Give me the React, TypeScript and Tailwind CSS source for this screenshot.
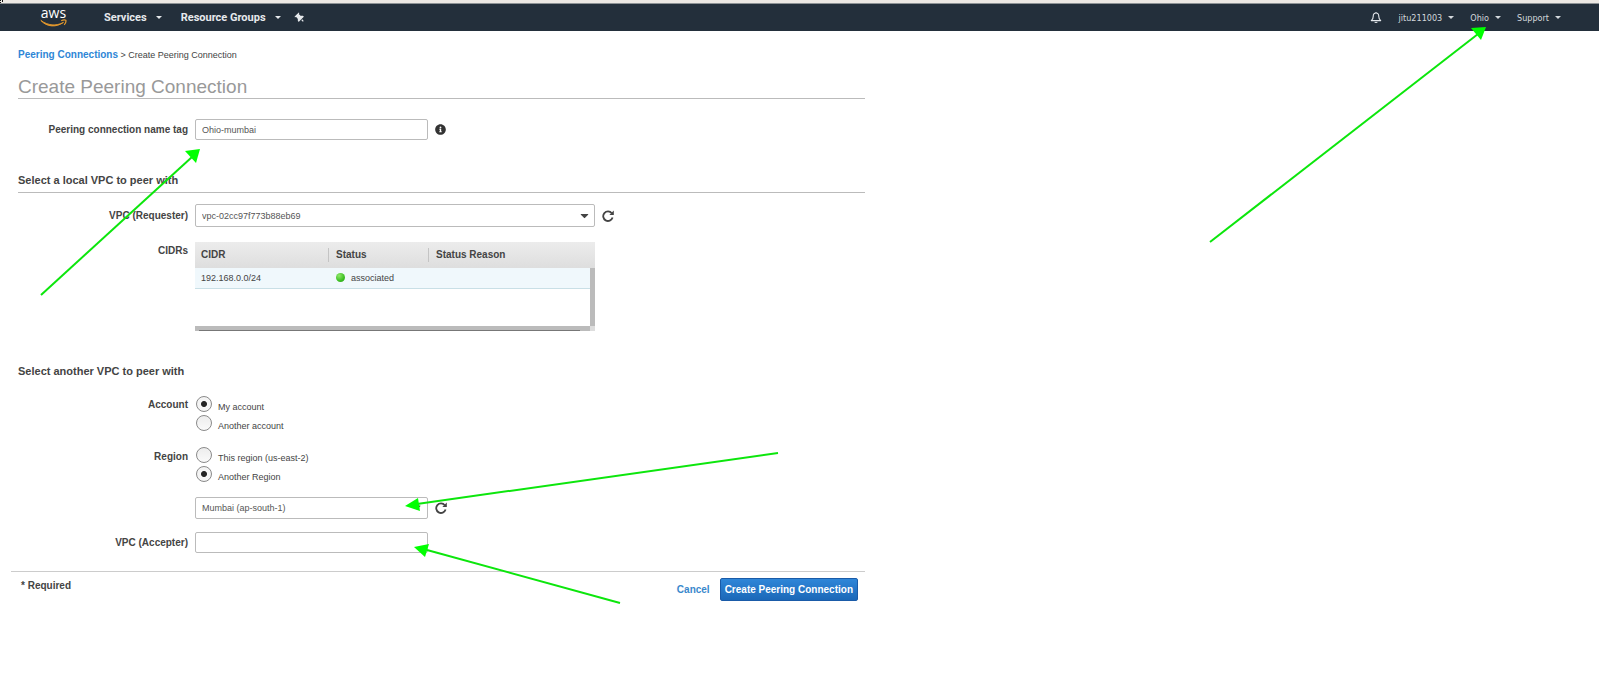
import React from "react";
import { FaInfoCircle, FaCaretDown } from "react-icons/fa";
import { FaThumbtack } from "react-icons/fa6";

function Caret() {
  return (
    <svg viewBox="0 0 6 3" className="h-[3px] w-[6px] shrink-0" aria-hidden="true">
      <path d="M0 0h6L3 3z" fill="currentColor" />
    </svg>
  );
}

function AwsLogo() {
  return (
    <a href="#" aria-label="AWS home" className="flex w-[27px] flex-col">
      <span className="block h-[10px] text-center font-['Open_Sans',sans-serif] text-[14px] leading-[8px] font-medium text-white">aws</span>
      <svg viewBox="0 0 27 8" className="h-[8px] w-[27px]" aria-hidden="true">
        <path d="M.8 1.4C8 6.6 16 7.4 23.5 3.4C16 8.6 7 8.2 .8 1.4z" fill="#e59a2c" stroke="#e59a2c" strokeWidth=".9" />
        <path d="M21.2 1.7C23 .9 25 .8 25.9 1.3C26.2 2.8 25.4 4.6 24.2 5.8" fill="none" stroke="#e59a2c" strokeWidth="1.2" />
      </svg>
    </a>
  );
}

function Bell() {
  return (
    <svg viewBox="0 0 12 13" className="h-[13px] w-[12px]" fill="none" stroke="#e4e8ec" strokeWidth="1.1" aria-hidden="true">
      <path d="M6 1v1M6 2C3.9 2 3.2 3.6 3.2 5.4C3.2 7.7 2.2 8.4 1.3 9.6H10.7C9.8 8.4 8.8 7.7 8.8 5.4C8.8 3.6 8.1 2 6 2z" strokeLinejoin="round" />
      <path d="M4.8 10.8C5.1 11.8 6.9 11.8 7.2 10.8" />
    </svg>
  );
}

function Refresh() {
  return (
    <svg viewBox="0 0 12 12" className="h-3 w-3" aria-hidden="true">
      <path d="M9.8 3.2A4.8 4.8 0 1 0 10.6 7.6" fill="none" stroke="#444" strokeWidth="1.8" />
      <path d="M11.8 .6V5H7.4z" fill="#444" />
    </svg>
  );
}

function Row({ label, htmlFor, className = "", children }: { label: string; htmlFor?: string; className?: string; children: React.ReactNode }) {
  const cls = "w-[188px] shrink-0 text-right text-[10px] font-bold";
  return (
    <div className={`flex gap-[7px] ${className}`}>
      {htmlFor ? <label htmlFor={htmlFor} className={cls}>{label}</label> : <span className={cls}>{label}</span>}
      {children}
    </div>
  );
}

function Radio({ name, label, checked }: { name: string; label: string; checked?: boolean }) {
  return (
    <label className="flex h-[19px] items-start gap-[6px]">
      <input
        type="radio"
        name={name}
        defaultChecked={checked}
        className="ml-px h-4 w-4 appearance-none rounded-full border border-[#8a8a8a] bg-linear-to-b from-[#ededed] to-[#fafafa] checked:bg-[radial-gradient(circle,#222_0,#222_2.5px,#f4f4f4_3.5px)]"
      />
      <span className="pt-[5px]">{label}</span>
    </label>
  );
}

const arrows = [
  { line: "M41 295L192 157", head: "M200 149L196 163L185 151z" },
  { line: "M1210 242L1478 34", head: "M1486 27L1481 40L1471 28z" },
  { line: "M778 453L417 504", head: "M405 506L418 498L420 511z" },
  { line: "M620 603L427 550", head: "M414 547L429 544L425 557z" },
];

export default function App() {
  const field = "rounded-[2px] border border-[#bbb] bg-white px-[6px] text-[#555]";
  return (
    <div className="relative min-h-screen overflow-hidden bg-white font-['Liberation_Sans',Arial,sans-serif] text-[9px] leading-[12px] text-[#444]">
      <div className="h-[4px] border-b border-[#8d9295] bg-[#ece8e3]" />
      <header className="flex h-[27px] items-center bg-[#232f3b] pr-[38px] pl-[40px] text-[#e6e9ec]">
        <AwsLogo />
        <nav className="ml-[37px] flex items-center font-['Roboto',sans-serif] text-[11px] font-bold">
          <button type="button" className="flex items-center gap-[9px]">Services <Caret /></button>
          <button type="button" className="ml-[19px] flex items-center gap-[9px]">Resource Groups <Caret /></button>
          <button type="button" aria-label="Pin shortcuts" className="ml-[14px]">
            <FaThumbtack className="h-[10px] w-[10px] -rotate-45" />
          </button>
        </nav>
        <div className="ml-auto flex items-center font-['DejaVu_Sans_Condensed','DejaVu_Sans',sans-serif] text-[9px] text-[#d3d8dc]">
          <button type="button" aria-label="Notifications"><Bell /></button>
          <button type="button" className="ml-[17px] flex items-center gap-[6px]">jitu211003 <Caret /></button>
          <button type="button" className="ml-[16px] flex items-center gap-[6px]">Ohio <Caret /></button>
          <button type="button" className="ml-[16px] flex items-center gap-[6px]">Support <Caret /></button>
        </div>
      </header>

      <main className="max-w-[865px]">
        <div className="pl-[18px]">
          <div className="pt-[18px]">
            <a href="#" className="text-[10px] font-bold text-[#2e86d6]">Peering Connections</a> &gt; Create Peering Connection
          </div>
          <h1 className="mt-[14px] border-b border-[#bbb] text-[19px] leading-[23px] text-[#999]">Create Peering Connection</h1>
        </div>

        <Row label="Peering connection name tag" htmlFor="name" className="mt-5 items-center">
          <input id="name" defaultValue="Ohio-mumbai" className={`h-[21px] w-[233px] ${field}`} />
          <FaInfoCircle className="h-[11px] w-[11px] text-[#333]" />
        </Row>

        <h2 className="mt-[33px] ml-[18px] border-b border-[#bbb] pb-[5px] text-[11px] leading-[14px] font-bold">Select a local VPC to peer with</h2>

        <Row label="VPC (Requester)" htmlFor="requester" className="mt-[11px] items-center">
          <div className="relative">
            <select id="requester" className={`h-[23px] w-[400px] appearance-none ${field}`}>
              <option>vpc-02cc97f773b88eb69</option>
            </select>
            <FaCaretDown className="pointer-events-none absolute top-[5px] right-[4px] h-[13px] w-[13px]" />
          </div>
          <button type="button" aria-label="Refresh VPCs"><Refresh /></button>
        </Row>

        <Row label="CIDRs" className="mt-[15px] items-start leading-[18px]">
          <div className="w-[400px] leading-[12px]">
            <table className="w-full table-fixed border-collapse text-left text-[10px]">
              <thead>
                <tr className="h-[26px] bg-linear-to-b from-[#ececec] to-[#dedede]">
                  <th className="w-[133px] px-[6px]">CIDR</th>
                  <th className="w-[100px] bg-[linear-gradient(#c4c4c4,#c4c4c4)] bg-[size:1px_14px] bg-left bg-no-repeat px-[8px]">Status</th>
                  <th className="bg-[linear-gradient(#c4c4c4,#c4c4c4)] bg-[size:1px_14px] bg-left bg-no-repeat px-[8px]">Status Reason</th>
                </tr>
              </thead>
            </table>
            <div className="flex h-[58px] items-start border-r-[5px] border-[#bbb]">
              <table className="w-full table-fixed border-collapse text-left">
                <tbody>
                  <tr className="h-[20px] border-b border-[#c9dfe6] bg-[#f0f8fc]">
                    <td className="w-[133px] px-[6px]">192.168.0.0/24</td>
                    <td className="px-[8px]">
                      <span className="flex items-center gap-[6px]">
                        <span className="h-[9px] w-[9px] rounded-full bg-[radial-gradient(circle_at_35%_30%,#8fe86a,#3cbf22_60%,#27991a)]" />
                        associated
                      </span>
                    </td>
                  </tr>
                </tbody>
              </table>
            </div>
            <div className="h-[5px] border-r-[5px] border-[#ddd] bg-[#bbb] pt-[4px] pr-[10px] pl-[4px]">
              <div className="h-px bg-[#777]" />
            </div>
          </div>
        </Row>

        <h2 className="mt-[33px] ml-[18px] text-[11px] leading-[14px] font-bold">Select another VPC to peer with</h2>

        <Row label="Account" className="mt-[18px] leading-[18px]">
          <div className="leading-[12px]"><Radio name="account" label="My account" checked /><Radio name="account" label="Another account" /></div>
        </Row>
        <Row label="Region" className="mt-[13px] leading-[20px]">
          <div className="leading-[12px]"><Radio name="region" label="This region (us-east-2)" /><Radio name="region" label="Another Region" checked /></div>
        </Row>

        <div className="mt-[12px] flex items-center gap-[7px] pl-[195px]">
          <div className="relative">
            <select aria-label="Region" className={`h-[22px] w-[233px] appearance-none ${field}`}>
              <option>Mumbai (ap-south-1)</option>
            </select>
            <FaCaretDown className="pointer-events-none absolute top-[4px] right-[5px] h-3 w-3" />
          </div>
          <button type="button" aria-label="Refresh regions"><Refresh /></button>
        </div>
        <Row label="VPC (Accepter)" htmlFor="accepter" className="mt-[13px] items-center">
          <input id="accepter" className={`h-[21px] w-[233px] ${field}`} />
        </Row>

        <footer className="mt-[18px] ml-[11px] flex items-start justify-between border-t border-[#ccc] pt-[6px] pr-[7px] pl-[10px] text-[10px]">
          <span className="pt-[2px] font-bold">* Required</span>
          <div className="flex items-center gap-[10px]">
            <a href="#" className="font-bold text-[#3a88cc]">Cancel</a>
            <button type="button" className="h-[23px] rounded-[2px] border border-[#1a5ba8] bg-linear-to-b from-[#2f86d8] to-[#1b68b8] px-[4px] font-bold text-white">Create Peering Connection</button>
          </div>
        </footer>
      </main>

      <svg viewBox="0 0 1599 700" className="pointer-events-none absolute top-0 left-0 h-[700px] w-[1599px] max-w-none" aria-hidden="true">
        <path d="M0 .5H1M2.5 0V2M0 2.5H1" stroke="#111" fill="none" />
        {arrows.map((a) => (
          <g key={a.line}>
            <path d={a.line} stroke="#0ce60c" strokeWidth="2" />
            <path d={a.head} fill="#0f0" />
          </g>
        ))}
      </svg>
    </div>
  );
}
